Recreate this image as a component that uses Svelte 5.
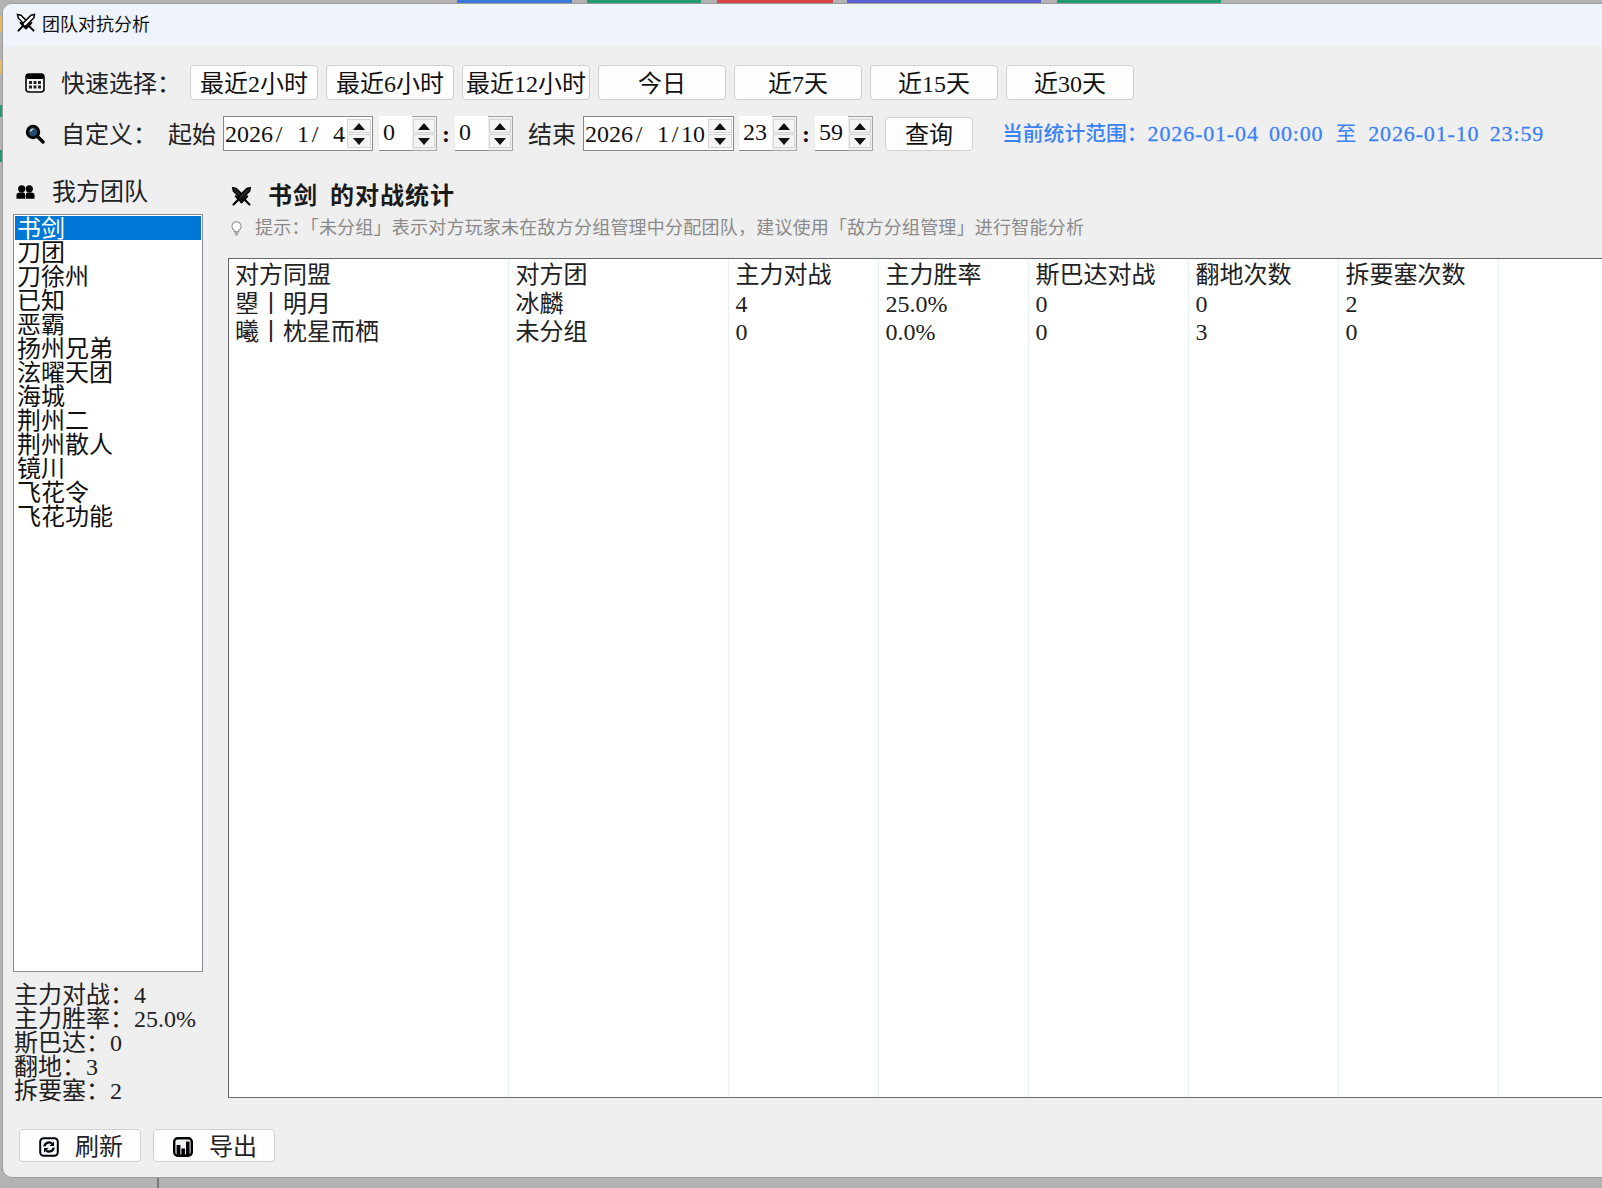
<script lang="ts">
  const quick = ["最近2小时", "最近6小时", "最近12小时", "今日", "近7天", "近15天", "近30天"];
  const teams = ["书剑", "刀团", "刀徐州", "已知", "恶霸", "扬州兄弟", "泫曜天团", "海城", "荆州二", "荆州散人", "镜川", "飞花令", "飞花功能"];
  const columns = ["对方同盟", "对方团", "主力对战", "主力胜率", "斯巴达对战", "翻地次数", "拆要塞次数"];
  const widths = [279, 220, 150, 150, 160, 150, 160];
  const rows = [
    ["曌丨明月", "冰麟", "4", "25.0%", "0", "0", "2"],
    ["曦丨枕星而栖", "未分组", "0", "0.0%", "0", "3", "0"]
  ];
  const stats = ["主力对战：4", "主力胜率：25.0%", "斯巴达：0", "翻地：3", "拆要塞：2"];
  const behind = [
    { left: 457, width: 115, color: "#3b78d8" },
    { left: 587, width: 114, color: "#1f9d6f" },
    { left: 717, width: 116, color: "#d64545" },
    { left: 847, width: 194, color: "#5b62cf" },
    { left: 1057, width: 164, color: "#1f9d6f" }
  ];

  let selected = $state("书剑");
</script>

{#snippet swords(cls: string)}
  <svg class={cls} viewBox="0 0 20 20" aria-hidden="true">
    {#each ["", "matrix(-1 0 0 1 20 0)"] as t}
      <g transform={t}>
        <path class="blade" d="M1.5 1.5 L5 2.2 L14.2 11.4 L11.4 14.2 L2.2 5 Z" />
        <path class="hilt" d="M9.8 15.4 L15.4 9.8 M13.6 13.6 L17.6 17.6" />
      </g>
    {/each}
  </svg>
{/snippet}

{#snippet spin()}
  <span class="spin-btns">
    <span class="spin-btn"><i class="up"></i></span>
    <span class="spin-btn"><i class="down"></i></span>
  </span>
{/snippet}

<div class="desk">
  {#each behind as b}
    <div class="behind" style="left:{b.left}px;width:{b.width}px;background:{b.color}"></div>
  {/each}
  <div class="edge orange"></div>
  <div class="edge orange second"></div>
  <div class="edge green"></div>
  <div class="edge green second"></div>
  <div class="desk-line"></div>

  <section class="window">
    <header class="titlebar">
      {@render swords("title-icon")}
      <span>团队对抗分析</span>
    </header>

    <div class="toolbar first">
      <svg class="tool-icon" viewBox="0 0 20 20" aria-hidden="true">
        <rect x="1" y="1" width="18" height="18" rx="3" fill="#f4f4f4" stroke="#000" stroke-width="1.6" />
        <rect x="1" y="1" width="18" height="5" rx="2" fill="#000" />
        <path d="M4 8h3v3H4zM8.5 8h3v3h-3zM13 8h3v3h-3zM4 12.5h3v3H4zM8.5 12.5h3v3h-3zM13 12.5h3v3h-3z" fill="#222" />
      </svg>
      <span class="label quick-label">快速选择：</span>
      <div class="quick">
        {#each quick as q}
          <button type="button">{q}</button>
        {/each}
      </div>
    </div>

    <div class="toolbar second">
      <svg class="tool-icon" viewBox="0 0 20 20" aria-hidden="true">
        <path d="M12 12 L18 18" stroke="#000" stroke-width="3.4" stroke-linecap="round" />
        <circle cx="8" cy="8" r="7.2" fill="#000" />
        <circle cx="8" cy="8" r="4.4" fill="#234a6b" />
        <path d="M5.5 7.5 A3 3 0 0 1 8.5 5" fill="none" stroke="#fff" stroke-width="1.2" />
      </svg>
      <span class="label custom-label">自定义：</span>
      <span class="label pair">起始</span>
      <span class="date">2026<span class="sl">/</span> 1<span class="sl">/</span> 4{@render spin()}</span>
      <span class="time"><span class="value">0</span>{@render spin()}</span>
      <span class="colon">:</span>
      <span class="time"><span class="value">0</span>{@render spin()}</span>
      <span class="label pair end">结束</span>
      <span class="date wide">2026<span class="sl">/</span> 1<span class="sl">/</span>10{@render spin()}</span>
      <span class="time after"><span class="value">23</span>{@render spin()}</span>
      <span class="colon">:</span>
      <span class="time"><span class="value">59</span>{@render spin()}</span>
      <button class="search" type="button">查询</button>
      <span class="range">当前统计范围：<span class="stamp">2026-01-04 00:00</span><span class="to">至</span><span class="stamp">2026-01-10 23:59</span></span>
    </div>

    <div class="main">
      <aside class="side">
        <div class="side-title">
          <svg viewBox="0 0 20 16" aria-hidden="true">
            <circle cx="6" cy="4.6" r="3.8" />
            <circle cx="14" cy="4.6" r="3.8" />
            <path d="M0.5 15 V11.5 Q0.5 8.5 4 8.5 H8 Q9.7 8.5 9.7 11.5 V15 Z" />
            <path d="M10.3 15 V11.5 Q10.3 8.5 12 8.5 H16 Q19.5 8.5 19.5 11.5 V15 Z" />
          </svg>
          <span>我方团队</span>
        </div>
        <ul class="teams">
          {#each teams as team}
            <li class:active={team === selected}>
              <button type="button" onclick={() => (selected = team)}>{team}</button>
            </li>
          {/each}
        </ul>
        <div class="stats">
          {#each stats as s}
            <div>{s}</div>
          {/each}
        </div>
      </aside>

      <div class="content">
        <h2>
          {@render swords("head-icon")}
          <span>书剑 的对战统计</span>
        </h2>
        <p class="hint">
          <svg viewBox="0 0 12 16" aria-hidden="true">
            <path d="M3.6 10.2 C1.8 8.8 1 7.5 1 5.7 A5 5 0 0 1 11 5.7 C11 7.5 10.2 8.8 8.4 10.2 V11.5 H3.6 Z" fill="#fff" stroke="#888" stroke-width="1.1" />
            <path d="M4 13h4M4.8 15h2.4" stroke="#888" stroke-width="1.2" />
          </svg>
          <span>提示：「未分组」表示对方玩家未在敌方分组管理中分配团队，建议使用「敌方分组管理」进行智能分析</span>
        </p>
        <div class="table-box">
          <table>
            <colgroup>
              {#each widths as w}
                <col style="width:{w}px" />
              {/each}
              <col />
            </colgroup>
            <thead>
              <tr>
                {#each columns as c}
                  <th>{c}</th>
                {/each}
                <th></th>
              </tr>
            </thead>
            <tbody>
              {#each rows as row}
                <tr>
                  {#each row as cell}
                    <td>{cell}</td>
                  {/each}
                  <td></td>
                </tr>
              {/each}
              <tr class="filler">
                {#each widths as _}
                  <td></td>
                {/each}
                <td></td>
              </tr>
            </tbody>
          </table>
        </div>
      </div>
    </div>

    <footer class="footer">
      <button type="button">
        <svg viewBox="0 0 20 20" aria-hidden="true">
          <rect x="1.2" y="1.2" width="17.6" height="17.6" rx="3.5" fill="#f4f8fc" stroke="#000" stroke-width="2" />
          <path d="M5.2 9.4 A4.8 4.8 0 0 1 12.8 6.4 M14.8 10.6 A4.8 4.8 0 0 1 7.2 13.6" fill="none" stroke="#000" stroke-width="2.4" />
          <path d="M15 4.4 V9 H10.4 Z M5 15.6 V11 H9.6 Z" fill="#000" />
        </svg>
        <span>刷新</span>
      </button>
      <button type="button">
        <svg viewBox="0 0 20 20" aria-hidden="true">
          <rect x="1.2" y="1.2" width="17.6" height="17.6" rx="3.5" fill="#eef3f8" stroke="#000" stroke-width="2.4" />
          <path d="M3.6 8h3.8v10H3.6zM8.4 11.5h3.6V18H8.4zM13 4.5h3.6V18H13z" fill="#000" />
        </svg>
        <span>导出</span>
      </button>
    </footer>
  </section>
</div>

<style>
  :global(body) {
    margin: 0;
    overflow: hidden;
    background: #b3b3b3;
  }

  .desk {
    position: relative;
    width: 1602px;
    height: 1188px;
    overflow: hidden;
    background: #b3b3b3;
    color: #111;
    font-family: "Liberation Serif", "Noto Sans CJK SC", serif;
    font-size: 24px;
    line-height: 24px;
  }

  .behind {
    position: absolute;
    top: 0;
    height: 3px;
  }

  .edge {
    position: absolute;
    left: 0;
    width: 2px;
  }

  .edge.orange {
    top: 60px;
    height: 14px;
    background: #e8b85a;
  }

  .edge.orange.second {
    top: 16px;
    height: 16px;
  }

  .edge.green {
    top: 105px;
    height: 12px;
    background: #1f9d6f;
  }

  .edge.green.second {
    top: 150px;
    height: 12px;
  }

  .desk-line {
    position: absolute;
    left: 157px;
    top: 1178px;
    width: 2px;
    height: 10px;
    background: #777;
  }

  .window {
    position: absolute;
    left: 2px;
    top: 3px;
    width: 1640px;
    height: 1175px;
    box-sizing: border-box;
    border: 1px solid #9c9c9c;
    border-radius: 10px 0 0 10px;
    background: #efefef;
    overflow: hidden;
  }

  .titlebar {
    box-sizing: border-box;
    height: 42px;
    display: flex;
    align-items: center;
    gap: 6px;
    padding: 0 0 4px 13px;
    background: #eff4fb;
    font-family: "Noto Sans CJK SC", sans-serif;
    font-size: 18px;
    color: #111;
  }

  .title-icon {
    width: 20px;
    height: 20px;
    flex: none;
  }

  .title-icon .blade {
    fill: #fff;
    stroke: #000;
    stroke-width: 1.5;
  }

  .title-icon .hilt,
  .head-icon .hilt {
    fill: none;
    stroke: #000;
    stroke-width: 2;
    stroke-linecap: round;
  }

  .head-icon {
    width: 21px;
    height: 21px;
    flex: none;
  }

  .head-icon .blade {
    fill: #222;
    stroke: #000;
    stroke-width: 1.2;
  }

  .toolbar {
    display: flex;
    align-items: center;
    height: 35px;
    padding-left: 22px;
  }

  .toolbar.first {
    margin-top: 19px;
  }

  .toolbar.second {
    margin-top: 16px;
  }

  .tool-icon {
    width: 20px;
    height: 20px;
    flex: none;
  }

  .label {
    padding-top: 2px;
    white-space: nowrap;
    color: #222;
  }

  .quick-label {
    width: 129px;
    margin-left: 16px;
  }

  .custom-label {
    width: 107px;
    margin-left: 16px;
  }

  .pair {
    width: 48px;
    margin-right: 7px;
  }

  .pair.end {
    margin-left: 15px;
  }

  .quick {
    display: flex;
    gap: 8px;
  }

  button {
    appearance: none;
    padding: 0;
    border: 0;
    background: transparent;
    color: inherit;
    font: inherit;
  }

  .quick button,
  .search,
  .footer button {
    box-sizing: border-box;
    padding-top: 2px;
    border: 1px solid #cfcfcf;
    border-radius: 4px;
    background: #fefefe;
  }

  .quick button {
    width: 128px;
    height: 35px;
  }

  .date {
    position: relative;
    box-sizing: border-box;
    width: 150px;
    height: 35px;
    padding-left: 1px;
    border: 1px solid #8a8a8a;
    background: #fff;
    line-height: 35px;
    white-space: pre;
    word-spacing: 6px;
  }

  .date.wide {
    width: 151px;
  }

  .sl {
    display: inline-block;
    width: 12px;
    text-align: center;
  }

  .date .spin-btns {
    position: absolute;
    right: 1px;
    top: 2px;
    height: 29px;
  }

  .time {
    display: flex;
    box-sizing: border-box;
    width: 58px;
    height: 35px;
    margin-left: 6px;
    background: #fff;
    border-bottom: 1px solid #8a8a8a;
  }

  .colon + .time {
    margin-left: 0;
  }

  .time.after {
    margin-left: 5px;
  }

  .time .value {
    flex: 1;
    padding-left: 4px;
    line-height: 33px;
  }

  .time .spin-btns {
    width: 25px;
    height: 35px;
    padding: 2px 1px;
    background: #efefef;
    border: 1px solid #a6a6a6;
    border-left: 0;
  }

  .spin-btns {
    box-sizing: border-box;
    display: flex;
    flex-direction: column;
    gap: 1px;
    width: 24px;
    flex: none;
  }

  .spin-btn {
    flex: 1;
    display: grid;
    place-items: center;
    border: 1px solid #d4d4d4;
    background: #f4f4f4;
  }

  .spin-btn i {
    width: 0;
    height: 0;
    border-left: 6px solid transparent;
    border-right: 6px solid transparent;
  }

  .spin-btn .up {
    border-bottom: 7px solid #111;
  }

  .spin-btn .down {
    border-top: 7px solid #111;
  }

  .colon {
    width: 18px;
    text-align: center;
    font-weight: 700;
  }

  .search {
    width: 88px;
    height: 34px;
    margin-left: 12px;
    flex: none;
  }

  .range {
    margin-left: 29px;
    white-space: pre;
    color: #3b82f6;
    font-size: 20.8px;
    font-weight: 500;
  }

  .stamp {
    font-size: 22px;
    font-weight: 400;
    letter-spacing: 0.85px;
    word-spacing: 4px;
    -webkit-text-stroke: 0.3px #3b82f6;
  }

  .to {
    margin: 0 12px;
    font-weight: 400;
  }

  .main {
    display: grid;
    grid-template-columns: 190px 1fr;
    column-gap: 25px;
    height: 926px;
    margin-top: 27px;
    padding-left: 10px;
  }

  .side {
    min-width: 0;
  }

  .side-title {
    display: flex;
    align-items: center;
    gap: 17px;
    height: 28px;
    padding-left: 3px;
    color: #222;
  }

  .side-title svg {
    width: 19px;
    height: 16px;
    flex: none;
    fill: #000;
  }

  .teams {
    box-sizing: border-box;
    height: 758px;
    margin: 8px 0 0;
    padding: 1px;
    list-style: none;
    border: 1px solid #8a8a99;
    background: #fff;
  }

  .teams li button {
    display: block;
    box-sizing: border-box;
    width: 100%;
    height: 24px;
    padding: 1px 0 0 2px;
    text-align: left;
    line-height: 24px;
  }

  .teams li.active button {
    background: #0078d7;
    color: #fff;
  }

  .stats {
    margin-top: 11px;
    padding-left: 1px;
    color: #222;
    white-space: nowrap;
  }

  .content {
    display: flex;
    flex-direction: column;
    padding-top: 4px;
    min-width: 0;
  }

  h2 {
    display: flex;
    align-items: center;
    gap: 16px;
    height: 28px;
    margin: 0 0 0 3px;
    font-size: 24px;
    font-weight: 700;
    letter-spacing: 1px;
    color: #1a1a1a;
    white-space: pre;
    word-spacing: 5px;
  }

  .hint {
    display: flex;
    align-items: center;
    gap: 13px;
    height: 24px;
    margin: 6px 0 0 3px;
    color: #8a8a8a;
    font-size: 18px;
    letter-spacing: 0.22px;
  }

  .hint svg {
    width: 11px;
    height: 15px;
    flex: none;
  }

  .table-box {
    width: 1400px;
    height: 840px;
    margin-top: 18px;
    box-sizing: border-box;
    border: 1px solid #666;
    background: #fff;
  }

  table {
    width: 100%;
    height: 100%;
    border-collapse: collapse;
    table-layout: fixed;
  }

  th,
  td {
    padding: 2px 0 0 7px;
    height: 26px;
    text-align: left;
    font-weight: 400;
    vertical-align: middle;
    border-right: 1px solid #e8f0fa;
    color: #222;
  }

  th:first-child,
  td:first-child {
    padding-left: 6px;
  }

  thead th {
    height: 28px;
  }

  tr.filler td {
    height: auto;
    padding: 0;
  }

  .footer {
    display: flex;
    gap: 12px;
    margin-top: 25px;
    padding-left: 16px;
  }

  .footer button {
    display: flex;
    align-items: center;
    justify-content: center;
    gap: 16px;
    width: 122px;
    height: 33px;
    padding-left: 2px;
    color: #222;
  }

  .footer svg {
    width: 20px;
    height: 20px;
    flex: none;
  }
</style>
